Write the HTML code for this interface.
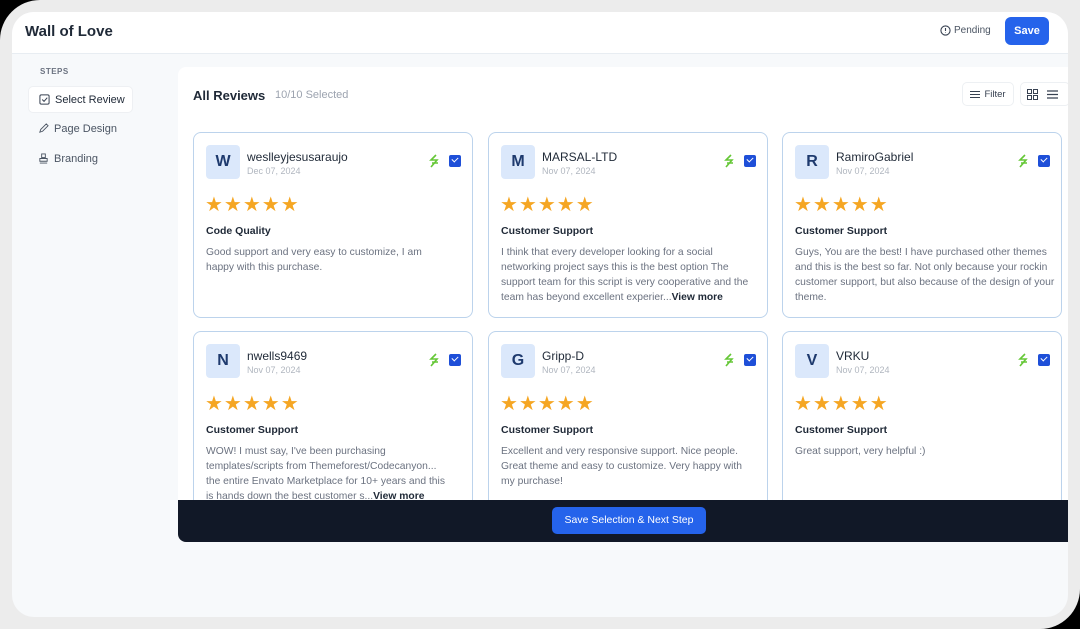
<!DOCTYPE html>
<html><head><style>
*{margin:0;padding:0;box-sizing:border-box}
body{width:1080px;height:629px;background:#000;font-family:"Liberation Sans",sans-serif;position:relative;overflow:hidden}
.frame{position:absolute;left:0;top:0;width:1080px;height:629px;background:#ececec;border-radius:40px 0 40px 0}
.panel{position:absolute;left:12px;top:12px;width:1056px;height:605px;background:#f7f9fb;border-radius:22px;overflow:hidden}
.hdr{position:absolute;left:0;top:0;width:1056px;height:42px;background:#fff;border-bottom:1px solid #e8edf2}
.title{position:absolute;left:13px;top:11px;font-size:15px;font-weight:bold;color:#1f2937}
.pend{position:absolute;left:928px;top:13px;font-size:10px;color:#4b5563;display:flex;align-items:center;gap:3px}
.save{position:absolute;left:993px;top:5px;width:44px;height:28px;background:#2563eb;color:#fff;border-radius:6px;font-size:11px;font-weight:bold;text-align:center;line-height:28px}
.steps{position:absolute;left:28px;top:55px;font-size:8px;color:#6b7280;font-weight:bold;letter-spacing:.5px}
.step{position:absolute;left:16px;width:105px;height:27px;font-size:11px;color:#4b5563;display:flex;align-items:center;gap:5px;padding-left:10px}
.step.act{background:#fff;border:1px solid #eef0f3;border-radius:5px;color:#1f2937}
.main{position:absolute;left:166px;top:55px;width:900px;height:475px;background:#fff;border-radius:8px 0 0 8px;overflow:hidden}
.h2{position:absolute;left:15px;top:21px;font-size:13px;font-weight:bold;color:#1f2937}
.sel{position:absolute;left:97px;top:22px;font-size:11px;color:#9ca3af}
.filter{position:absolute;left:784px;top:15px;width:52px;height:24px;border:1px solid #edf0f3;border-radius:5px;font-size:9.5px;color:#374151;display:flex;align-items:center;justify-content:center;gap:4px}
.view{position:absolute;left:842px;top:15px;width:50px;height:24px;border:1px solid #edf0f3;border-radius:5px}
.card{position:absolute;width:280px;height:186px;border:1px solid #bcd3ec;border-radius:8px;background:#fff}
.av{position:absolute;left:12px;top:12px;width:34px;height:34px;background:#dbe8fb;border-radius:4px;color:#1e3a6e;font-size:16px;font-weight:bold;text-align:center;line-height:34px}
.nm{position:absolute;left:53px;top:17px;font-size:12px;color:#1f2937}
.dt{position:absolute;left:53px;top:33px;font-size:9px;color:#b0b6bf}
.ic{position:absolute;left:235px;top:21px}
.cb{position:absolute;left:255px;top:22px;width:12px;height:12px;background:#1e4fd8;border-radius:2px}
.cb::after{content:"";position:absolute;left:3px;top:2px;width:5px;height:3px;border-left:1.5px solid #fff;border-bottom:1.5px solid #fff;transform:rotate(-45deg)}
.stars{position:absolute;left:11px;top:59px;color:#f5a623;font-size:20px;letter-spacing:1px}
.cat{position:absolute;left:12px;top:92px;font-size:10.5px;font-weight:bold;color:#1f2937}
.txt{position:absolute;left:12px;top:112px;width:244px;font-size:10.3px;line-height:15px;color:#6b7280}
.txt b{color:#1f2937;font-weight:bold}
.bar{position:absolute;left:0;top:433px;width:900px;height:42px;background:#111827}
.nb{position:absolute;left:374px;top:7px;width:154px;height:27px;background:#2563eb;border-radius:5px;color:#fff;font-size:10.5px;text-align:center;line-height:27px}
</style></head><body>
<div class="frame"></div>
<div class="panel">
<div class="hdr"><div class="title">Wall of Love</div>
<div class="pend"><svg width="11" height="11" viewBox="0 0 12 12"><circle cx="6" cy="6" r="5" fill="none" stroke="#374151" stroke-width="1.2"/><path d="M6 3.3v3.2M6 8v.6" stroke="#374151" stroke-width="1.2"/></svg>Pending</div>
<div class="save">Save</div></div>
<div class="steps">STEPS</div>
<div class="step act" style="top:74px"><svg width="11" height="11" viewBox="0 0 12 12"><rect x="1" y="1" width="10" height="10" rx="1.5" fill="none" stroke="#374151" stroke-width="1.1"/><path d="M3.5 6l2 2 3.5-4" fill="none" stroke="#374151" stroke-width="1.1"/></svg>Select Review</div>
<div class="step" style="top:103px"><svg width="11" height="11" viewBox="0 0 12 12"><path d="M2 10l1-3 6-6 2 2-6 6z" fill="none" stroke="#4b5563" stroke-width="1"/></svg>Page Design</div>
<div class="step" style="top:133px"><svg width="11" height="11" viewBox="0 0 12 12"><path d="M4 1h4v4H4zM2 6h8v3H2zM2 11h8" fill="none" stroke="#4b5563" stroke-width="1"/></svg>Branding</div>
<div class="main">
<div class="h2">All Reviews</div><div class="sel">10/10 Selected</div>
<div class="filter"><svg width="10" height="9" viewBox="0 0 10 9"><path d="M0 1.5h10M0 4.5h10M0 7.5h10" stroke="#374151"/></svg>Filter</div>
<div class="view"><svg style="position:absolute;left:6px;top:6px" width="11" height="11" viewBox="0 0 11 11"><rect x=".5" y=".5" width="4" height="4" fill="none" stroke="#374151"/><rect x="6.5" y=".5" width="4" height="4" fill="none" stroke="#374151"/><rect x=".5" y="6.5" width="4" height="4" fill="none" stroke="#374151"/><rect x="6.5" y="6.5" width="4" height="4" fill="none" stroke="#374151"/></svg><svg style="position:absolute;left:26px;top:7px" width="11" height="9" viewBox="0 0 11 9"><path d="M0 1h11M0 4.5h11M0 8h11" stroke="#374151" stroke-width="1.2"/></svg></div>

<div class="card" style="left:15px;top:65px"><div class="av">W</div><div class="nm">weslleyjesusaraujo</div><div class="dt">Dec 07, 2024</div><svg class="ic" width="10" height="14" viewBox="0 0 10 14"><path d="M7 1L2 6l6 0-6 7M3 9h6" stroke="#65c736" stroke-width="1.6" fill="none"/></svg><div class="cb"></div><div class="stars">★★★★★</div><div class="cat">Code Quality</div><div class="txt">Good support and very easy to customize, I am happy with this purchase.</div></div>
<div class="card" style="left:310px;top:65px"><div class="av">M</div><div class="nm">MARSAL-LTD</div><div class="dt">Nov 07, 2024</div><svg class="ic" width="10" height="14" viewBox="0 0 10 14"><path d="M7 1L2 6l6 0-6 7M3 9h6" stroke="#65c736" stroke-width="1.6" fill="none"/></svg><div class="cb"></div><div class="stars">★★★★★</div><div class="cat">Customer Support</div><div class="txt" style="width:262px">I think that every developer looking for a social networking project says this is the best option The support team for this script is very cooperative and the team has beyond excellent experier...<b>View more</b></div></div>
<div class="card" style="left:604px;top:65px"><div class="av">R</div><div class="nm">RamiroGabriel</div><div class="dt">Nov 07, 2024</div><svg class="ic" width="10" height="14" viewBox="0 0 10 14"><path d="M7 1L2 6l6 0-6 7M3 9h6" stroke="#65c736" stroke-width="1.6" fill="none"/></svg><div class="cb"></div><div class="stars">★★★★★</div><div class="cat">Customer Support</div><div class="txt" style="width:262px">Guys, You are the best! I have purchased other themes and this is the best so far. Not only because your rockin customer support, but also because of the design of your theme.</div></div>

<div class="card" style="left:15px;top:264px"><div class="av">N</div><div class="nm">nwells9469</div><div class="dt">Nov 07, 2024</div><svg class="ic" width="10" height="14" viewBox="0 0 10 14"><path d="M7 1L2 6l6 0-6 7M3 9h6" stroke="#65c736" stroke-width="1.6" fill="none"/></svg><div class="cb"></div><div class="stars">★★★★★</div><div class="cat">Customer Support</div><div class="txt">WOW! I must say, I've been purchasing templates/scripts from Themeforest/Codecanyon... the entire Envato Marketplace for 10+ years and this is hands down the best customer s...<b>View more</b></div></div>
<div class="card" style="left:310px;top:264px"><div class="av">G</div><div class="nm">Gripp-D</div><div class="dt">Nov 07, 2024</div><svg class="ic" width="10" height="14" viewBox="0 0 10 14"><path d="M7 1L2 6l6 0-6 7M3 9h6" stroke="#65c736" stroke-width="1.6" fill="none"/></svg><div class="cb"></div><div class="stars">★★★★★</div><div class="cat">Customer Support</div><div class="txt">Excellent and very responsive support. Nice people. Great theme and easy to customize. Very happy with my purchase!</div></div>
<div class="card" style="left:604px;top:264px"><div class="av">V</div><div class="nm">VRKU</div><div class="dt">Nov 07, 2024</div><svg class="ic" width="10" height="14" viewBox="0 0 10 14"><path d="M7 1L2 6l6 0-6 7M3 9h6" stroke="#65c736" stroke-width="1.6" fill="none"/></svg><div class="cb"></div><div class="stars">★★★★★</div><div class="cat">Customer Support</div><div class="txt">Great support, very helpful :)</div></div>

<div class="bar"><div class="nb">Save Selection &amp; Next Step</div></div>
</div>
</div>
</body></html>
